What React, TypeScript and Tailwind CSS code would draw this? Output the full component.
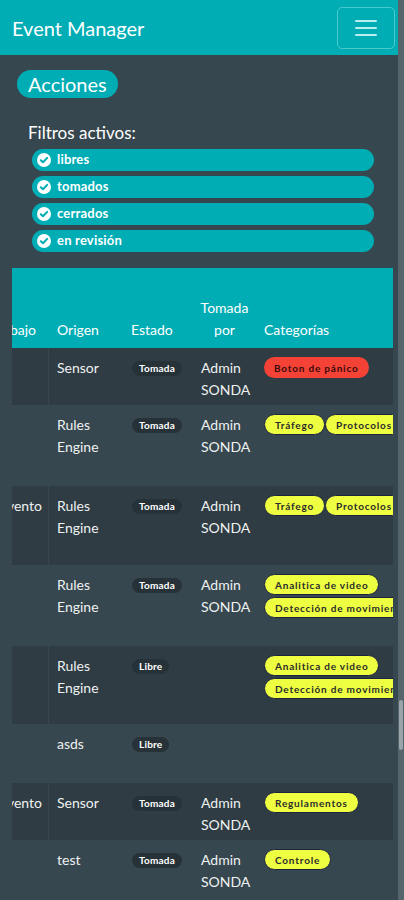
import React from "react";

type Row = {
  h: string;
  dark: boolean;
  c0: string;
  origen: string[];
  estado: string;
  por: string[];
  cats: { t: string; red?: boolean }[];
};

const rows: Row[] = [
  { h: "h-[57px]", dark: true, c0: "", origen: ["Sensor"], estado: "Tomada", por: ["Admin", "SONDA"], cats: [{ t: "Boton de pánico", red: true }] },
  { h: "h-[81px]", dark: false, c0: "", origen: ["Rules", "Engine"], estado: "Tomada", por: ["Admin", "SONDA"], cats: [{ t: "Tráfego" }, { t: "Protocolos" }] },
  { h: "h-[79px]", dark: true, c0: "Evento", origen: ["Rules", "Engine"], estado: "Tomada", por: ["Admin", "SONDA"], cats: [{ t: "Tráfego" }, { t: "Protocolos" }] },
  { h: "h-[81px]", dark: false, c0: "", origen: ["Rules", "Engine"], estado: "Tomada", por: ["Admin", "SONDA"], cats: [{ t: "Analitica de video" }, { t: "Detección de movimiento" }] },
  { h: "h-[78px]", dark: true, c0: "", origen: ["Rules", "Engine"], estado: "Libre", por: [], cats: [{ t: "Analitica de video" }, { t: "Detección de movimiento" }] },
  { h: "h-[59px]", dark: false, c0: "", origen: ["asds"], estado: "Libre", por: [], cats: [] },
  { h: "h-[57px]", dark: true, c0: "Evento", origen: ["Sensor"], estado: "Tomada", por: ["Admin", "SONDA"], cats: [{ t: "Regulamentos" }] },
  { h: "h-[70px]", dark: false, c0: "", origen: ["test"], estado: "Tomada", por: ["Admin", "SONDA"], cats: [{ t: "Controle" }] },
];

const filters = ["libres", "tomados", "cerrados", "en revisión"];

function CheckIcon() {
  return (
    <svg width="14" height="14" viewBox="0 0 14 14">
      <circle cx="7" cy="7" r="7" fill="#ffffff" />
      <path d="M3.8 7.2 L6 9.3 L10.2 4.9" fill="none" stroke="#00adb5" strokeWidth="2" strokeLinecap="round" strokeLinejoin="round" />
    </svg>
  );
}

export default function App() {
  return (
    <div className="flex w-[404px] min-h-[900px] bg-[#37474f] text-white" style={{ fontFamily: "Lato, 'Open Sans', sans-serif" }}>
      <div className="w-[398px] flex flex-col">
        <header className="h-[55px] bg-[#00adb5] flex items-center justify-between pl-[12px] pr-[3px]">
          <span className="text-[20px] leading-none">Event Manager</span>
          <button className="w-[58px] h-[42px] rounded-[5px] border border-[#4cc8cf] flex flex-col items-center justify-center gap-[5px]">
            <span className="block w-[22px] h-[2px] bg-[#b9eef1] rounded" />
            <span className="block w-[22px] h-[2px] bg-[#b9eef1] rounded" />
            <span className="block w-[22px] h-[2px] bg-[#b9eef1] rounded" />
          </button>
        </header>

        <div className="pl-[17px] pt-[15px]">
          <span className="inline-flex items-center h-[28px] px-[11px] rounded-full bg-[#00adb5] text-[20px]">Acciones</span>
        </div>

        <div className="pl-[28px] pt-[23px] text-[17px] leading-[24px]">Filtros activos:</div>

        <div className="pl-[32px] pr-[24px] pt-[4px] flex flex-col gap-[5px]">
          {filters.map((f) => (
            <div key={f} className="h-[22px] rounded-full bg-[#00adb5] flex items-center gap-[6px] pl-[5px] text-[13px] font-bold tracking-[0.2px]">
              <CheckIcon />
              <span>{f}</span>
            </div>
          ))}
        </div>

        <div className="ml-[12px] mt-[16px] w-[381px] overflow-hidden text-[14px] leading-[22px] text-[#eef1f2]">
          <div className="flex w-[424px] h-[80px] bg-[#00adb5] items-end pb-[7px] text-white">
            <div className="w-[36px] overflow-hidden flex justify-end whitespace-nowrap pr-[12px]">
              <span>Trabajo</span>
            </div>
            <div className="w-[75px] pl-[9px]">Origen</div>
            <div className="w-[70px] pl-[8px]">Estado</div>
            <div className="w-[63px] text-center">
              Tomada
              <br />
              por
            </div>
            <div className="w-[180px] pl-[8px]">Categorías</div>
          </div>

          {rows.map((r, i) => (
            <div key={i} className={`flex w-[424px] ${r.h} ${r.dark ? "bg-[#2f3c43]" : ""}`}>
              <div className="w-[36px] overflow-hidden flex justify-end whitespace-nowrap pr-[6px] pt-[9px]">
                <span>{r.c0}</span>
              </div>
              <div className="w-[75px] border-l border-[#37474f] pl-[8px] pt-[9px]">
                {r.origen.map((o) => (
                  <div key={o}>{o}</div>
                ))}
              </div>
              <div className="w-[70px] pl-[9px] pt-[9px]">
                <div className="h-[22px] flex items-center">
                  <span className="inline-flex items-center h-[15px] px-[7px] rounded-full bg-[#263238] text-[10px] font-bold text-white leading-none tracking-[0.2px]">
                    {r.estado}
                  </span>
                </div>
              </div>
              <div className="w-[63px] pl-[8px] pt-[9px]">
                {r.por.map((p) => (
                  <div key={p}>{p}</div>
                ))}
              </div>
              <div className="w-[180px] pl-[8px] pt-[9px] flex flex-wrap content-start gap-y-[2px]">
                {r.cats.map((c) => (
                  <span
                    key={c.t}
                    className={`inline-flex items-center h-[21px] px-[10px] rounded-full text-[10px] font-bold tracking-[0.8px] whitespace-nowrap leading-none ${
                      c.red ? "bg-[#f44336] text-[#3a0b0b]" : "bg-[#eeff41] text-[#2b2b2b] border border-[#1d2442]"
                    }`}
                  >
                    {c.t}
                  </span>
                ))}
              </div>
            </div>
          ))}
        </div>
      </div>
      <div className="w-[6px] bg-[#56646b] flex flex-col">
        <div className="mt-[700px] h-[50px] w-[4px] ml-[1px] bg-[#9aa5aa] rounded" />
      </div>
    </div>
  );
}
